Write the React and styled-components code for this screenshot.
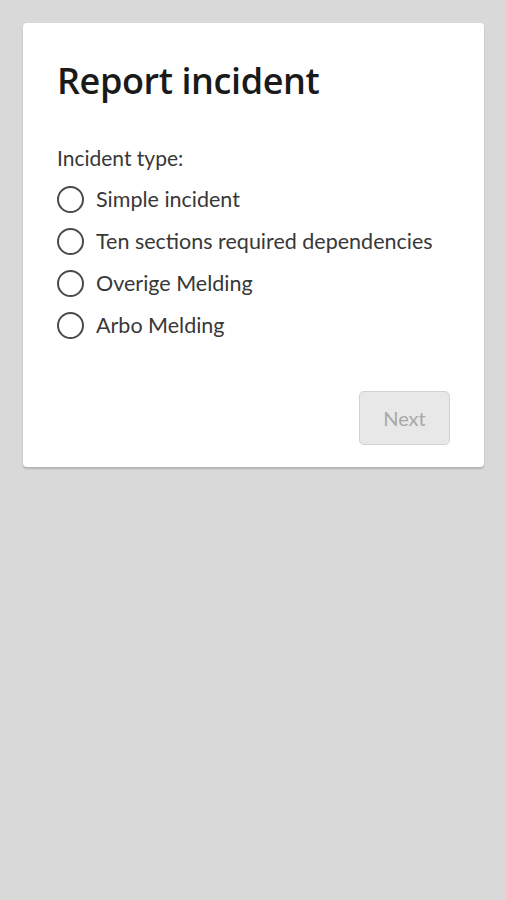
import React from 'react'
import styled, { createGlobalStyle } from 'styled-components'

const options = [
  'Simple incident',
  'Ten sections required dependencies',
  'Overige Melding',
  'Arbo Melding'
]

const App = () => {
  return (
    <>
      <GlobalStyle />
      <Page>
        <Card>
          <Title>Report incident</Title>
          <Fieldset>
            <Legend>Incident type:</Legend>
            {options.map((label) => (
              <Option key={label}>
                <Radio type='radio' name='incident-type' />
                <span>{label}</span>
              </Option>
            ))}
          </Fieldset>
          <Footer>
            <NextButton disabled>Next</NextButton>
          </Footer>
        </Card>
      </Page>
    </>
  )
}

const GlobalStyle = createGlobalStyle`
  html, body {
    margin: 0;
    padding: 0;
    background: #d9d9d9;
  }
  body {
    font-family: 'Lato', 'Open Sans', sans-serif;
    color: #222;
  }
`

const Page = styled.div`
  min-height: 900px;
  padding: 23px 22px 0 23px;
  box-sizing: border-box;
`

const Card = styled.section`
  background: #fff;
  border-radius: 4px;
  box-shadow: 0 2px 2px rgba(0, 0, 0, 0.18);
  padding: 36px 34px 22px 34px;
  height: 444px;
  box-sizing: border-box;
  display: flex;
  flex-direction: column;
`

const Title = styled.h1`
  font-family: 'Open Sans', sans-serif;
  font-weight: 600;
  font-size: 36px;
  line-height: 44px;
  margin: 0 0 42px;
  color: #1a1a1a;
  letter-spacing: -0.4px;
`

const Fieldset = styled.div`
  display: flex;
  flex-direction: column;
`

const Legend = styled.div`
  font-size: 21px;
  line-height: 26px;
  color: #383838;
  margin-bottom: 7px;
`

const Option = styled.label`
  display: flex;
  align-items: center;
  gap: 12px;
  height: 42px;
  font-size: 21.5px;
  color: #383838;
`

const Radio = styled.input`
  appearance: none;
  margin: 0;
  width: 27px;
  height: 27px;
  border: 2px solid #4a4a4a;
  border-radius: 50%;
  box-sizing: border-box;
  background: #fff;
`

const Footer = styled.div`
  margin-top: auto;
  display: flex;
  justify-content: flex-end;
`

const NextButton = styled.button`
  width: 91px;
  height: 54px;
  border: 1px solid #d2d2d2;
  border-radius: 5px;
  background: #e8e8e8;
  color: #a8a8a8;
  font-family: 'Lato', sans-serif;
  font-size: 20px;
`

export default App
